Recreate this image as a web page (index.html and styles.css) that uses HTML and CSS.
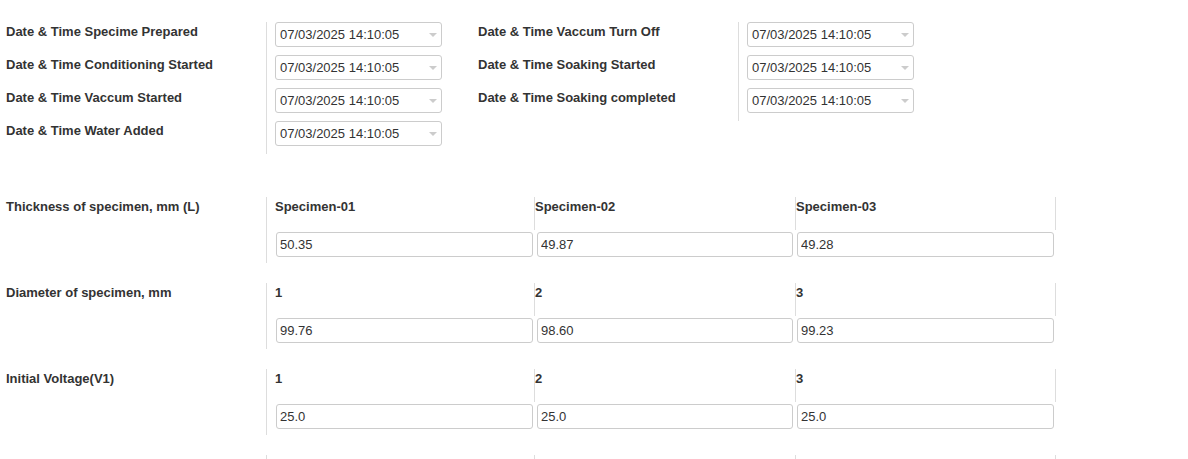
FILE: index.html
```html
<!DOCTYPE html>
<html>
<head>
<meta charset="utf-8">
<link rel="stylesheet" href="styles.css">
</head>
<body>
<div class="page">
  <section class="dates">
    <div class="group">
      <div class="labels">
        <div class="lbl">Date &amp; Time Specime Prepared</div>
        <div class="lbl">Date &amp; Time Conditioning Started</div>
        <div class="lbl">Date &amp; Time Vaccum Started</div>
        <div class="lbl">Date &amp; Time Water Added</div>
      </div>
      <div class="values values-first">
        <div class="picker"><span>07/03/2025 14:10:05</span><i class="caret"></i></div>
        <div class="picker"><span>07/03/2025 14:10:05</span><i class="caret"></i></div>
        <div class="picker"><span>07/03/2025 14:10:05</span><i class="caret"></i></div>
        <div class="picker"><span>07/03/2025 14:10:05</span><i class="caret"></i></div>
      </div>
    </div>
    <div class="group">
      <div class="labels">
        <div class="lbl">Date &amp; Time Vaccum Turn Off</div>
        <div class="lbl">Date &amp; Time Soaking Started</div>
        <div class="lbl">Date &amp; Time Soaking completed</div>
      </div>
      <div class="values">
        <div class="picker"><span>07/03/2025 14:10:05</span><i class="caret"></i></div>
        <div class="picker"><span>07/03/2025 14:10:05</span><i class="caret"></i></div>
        <div class="picker"><span>07/03/2025 14:10:05</span><i class="caret"></i></div>
      </div>
    </div>
  </section>

  <section class="measure first-measure">
    <div class="lbl mlabel">Thickness of specimen, mm (L)</div>
    <div class="cols">
      <div class="col"><div class="head">Specimen-01</div><input class="field" type="text" value="50.35"></div>
      <div class="col"><div class="head">Specimen-02</div><input class="field" type="text" value="49.87"></div>
      <div class="col"><div class="head">Specimen-03</div><input class="field" type="text" value="49.28"></div>
    </div>
  </section>

  <section class="measure">
    <div class="lbl mlabel">Diameter of specimen, mm</div>
    <div class="cols">
      <div class="col"><div class="head">1</div><input class="field" type="text" value="99.76"></div>
      <div class="col"><div class="head">2</div><input class="field" type="text" value="98.60"></div>
      <div class="col"><div class="head">3</div><input class="field" type="text" value="99.23"></div>
    </div>
  </section>

  <section class="measure">
    <div class="lbl mlabel">Initial Voltage(V1)</div>
    <div class="cols">
      <div class="col"><div class="head">1</div><input class="field" type="text" value="25.0"></div>
      <div class="col"><div class="head">2</div><input class="field" type="text" value="25.0"></div>
      <div class="col"><div class="head">3</div><input class="field" type="text" value="25.0"></div>
    </div>
  </section>

  <section class="measure">
    <div class="lbl mlabel"></div>
    <div class="cols">
      <div class="col"><div class="head"></div><input class="field" type="text" value=""></div>
      <div class="col"><div class="head"></div><input class="field" type="text" value=""></div>
      <div class="col"><div class="head"></div><input class="field" type="text" value=""></div>
    </div>
  </section>
</div>
</body>
</html>
```

FILE: styles.css
```css
* { box-sizing: border-box; }

html, body {
  margin: 0;
  padding: 0;
  background: #fff;
}

body {
  font-family: "Liberation Sans", Arial, sans-serif;
  font-size: 13px;
  color: #333;
  overflow: hidden;
}

.page {
  padding-top: 22px;
}

.dates {
  display: flex;
  align-items: flex-start;
}

.group {
  display: flex;
  align-items: flex-start;
}

.labels {
  width: 266px;
  padding-left: 6px;
}

.lbl {
  height: 33px;
  line-height: 20px;
  font-weight: bold;
  color: #333;
}

.values {
  border-left: 1px solid #ddd;
  padding-left: 8px;
}

.values-first {
  width: 206px;
}

.picker {
  width: 167px;
  height: 25px;
  margin-bottom: 8px;
  border: 1px solid #ccc;
  border-radius: 3px;
  display: flex;
  align-items: center;
  justify-content: space-between;
  padding: 0 4px 0 4px;
  color: #333;
  line-height: 20px;
}

.caret {
  display: block;
  width: 0;
  height: 0;
  border-left: 4px solid transparent;
  border-right: 4px solid transparent;
  border-top: 4px solid #ccc;
  margin-top: 1px;
}

.measure {
  display: flex;
  margin-bottom: 20px;
}

.first-measure {
  margin-top: 43px;
}

.mlabel {
  width: 266px;
  padding-left: 6px;
}

.cols {
  display: flex;
  border-left: 1px solid #ddd;
  padding-left: 8px;
  padding-bottom: 6px;
}

.col {
  width: 260px;
}

.col:nth-child(2) {
  width: 261px;
}

.head {
  height: 33px;
  line-height: 20px;
  font-weight: bold;
  border-right: 1px solid #ddd;
  color: #333;
}

.field {
  display: block;
  width: 257px;
  height: 25px;
  margin: 2px 0 0 1px;
  border: 1px solid #ccc;
  border-radius: 3px;
  padding: 0 3px;
  font-family: "Liberation Sans", Arial, sans-serif;
  font-size: 13px;
  color: #333;
  background: #fff;
  outline: none;
}

.col:nth-child(2) .field {
  width: 256px;
  margin-left: 2px;
}
```
